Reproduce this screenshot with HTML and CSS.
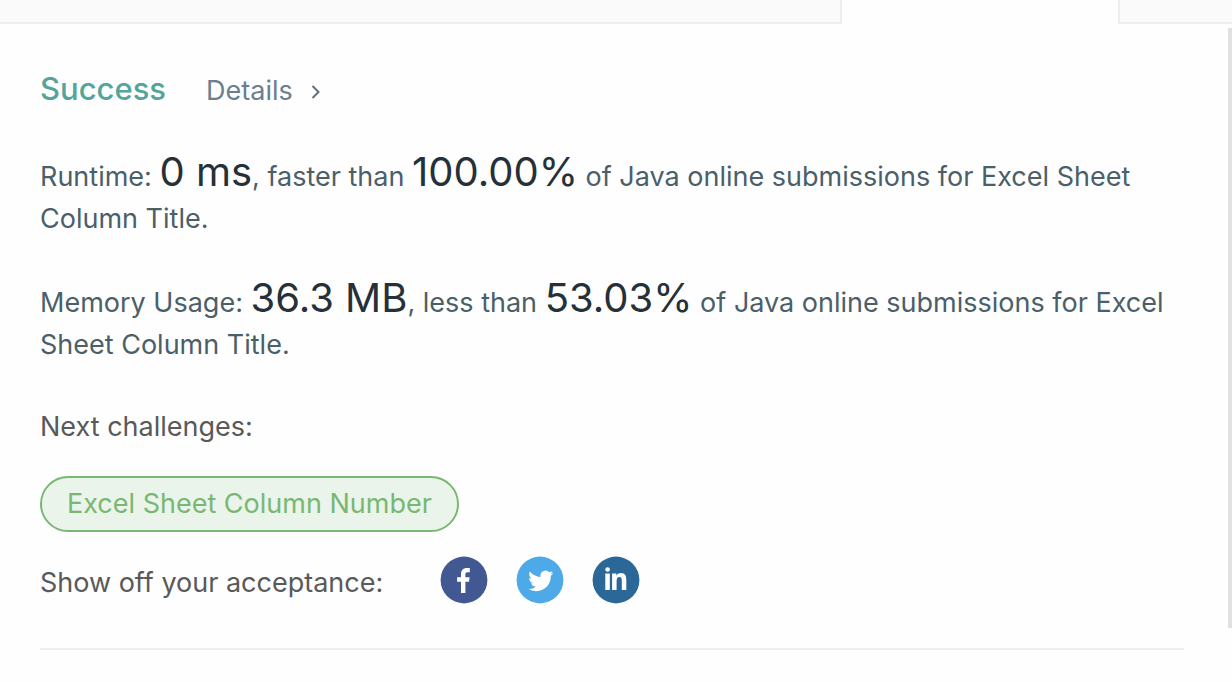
FILE: index.html
```html
<!DOCTYPE html>
<html lang="en">
<head>
<meta charset="utf-8">
<meta name="viewport" content="width=device-width, initial-scale=1">
<title>Submission result</title>
<link rel="stylesheet" href="styles.css">
</head>
<body>
<div class="tabs">
  <div class="tab tab-before"></div>
  <div class="tab tab-active"></div>
  <div class="tab tab-after"></div>
</div>
<div class="pane">
  <main class="result">
    <header class="status">
      <h1 class="verdict">Success</h1>
      <a class="details" href="#details">Details
        <svg class="chevron" viewBox="0 0 12 16" aria-hidden="true"><path d="M2.500 2l6 6-6 6"/></svg>
      </a>
    </header>
    <p class="metric">Runtime: <span class="value">0 ms</span>, faster than <span class="value">100.00%</span> of Java online submissions for Excel Sheet Column Title.</p>
    <p class="metric">Memory Usage: <span class="value">36.3 MB</span>, less than <span class="value">53.03%</span> of Java online submissions for Excel Sheet Column Title.</p>
    <h2 class="label">Next challenges:</h2>
    <a class="challenge" href="#challenge">Excel Sheet Column Number</a>
    <div class="share">
      <span class="label">Show off your acceptance:</span>
      <div class="networks">
        <a class="network" href="#facebook" aria-label="Facebook">
          <svg viewBox="0 0 48 48"><circle cx="24" cy="24" r="23.4" fill="#425893"/><path d="M21 37V25.700h-3.900v-4.500h3.900v-3.300c0-3.900 2.400-6 5.900-6 1.100 0 2.100.1 2.900.2v4.100h-2.200c-1.800 0-2.200.9-2.200 2.100v2.900h4.200l-.6 4.500h-3.600V37z" fill="#fff"/></svg>
        </a>
        <a class="network" href="#twitter" aria-label="Twitter">
          <svg viewBox="0 0 48 48"><circle cx="24" cy="24" r="23.4" fill="#4da9e7"/><path transform="translate(12.200 12.300) scale(1.050)" d="M23.950 4.570a10 10 0 0 1-2.820.77 4.960 4.960 0 0 0 2.160-2.720c-.95.55-2 .96-3.130 1.180a4.920 4.920 0 0 0-8.380 4.480C7.690 8.090 4.070 6.130 1.640 3.160a4.820 4.820 0 0 0-.67 2.480c0 1.710.87 3.210 2.190 4.100a4.900 4.900 0 0 1-2.230-.62v.06a4.920 4.920 0 0 0 3.950 4.830 5 5 0 0 1-2.210.08 4.940 4.940 0 0 0 4.600 3.420A9.870 9.870 0 0 1 0 19.540a13.990 13.990 0 0 0 7.550 2.210c9.050 0 14-7.500 14-13.990 0-.21 0-.42-.02-.63a9.940 9.940 0 0 0 2.420-2.560z" fill="#fff"/></svg>
        </a>
        <a class="network" href="#linkedin" aria-label="LinkedIn">
          <svg viewBox="0 0 48 48"><circle cx="24" cy="24" r="23.4" fill="#2b6897"/><g fill="#fff"><circle cx="15.600" cy="13.500" r="2.300"/><path d="M13.300 17.500h4.500V34h-4.500zM20.100 17.500h4.300v2.200c.8-1.500 2.300-2.600 4.600-2.600 4.400 0 5.300 2.900 5.300 6.900v10h-4.500v-8.900c0-2.200-.2-4.100-2.400-4.100s-2.800 1.800-2.800 4V34h-4.500z"/></g></svg>
        </a>
      </div>
    </div>
    <hr class="divider">
  </main>
  <div class="scroll-thumb"></div>
</div>
</body>
</html>
```
FILE: styles.css
```css
* {
  box-sizing: border-box;
}

body {
  margin: 0;
  background: #fefefe;
  color: #595959;
  font: 400 27px/42px Inter, "Liberation Sans", sans-serif;
}

.tabs {
  display: grid;
  grid-template-columns: 842fr 276fr 114fr;
  height: 24px;
}

.tab {
  border: 0 solid #eee;
}

.tab-before {
  background: #fafafa;
  border-width: 0 2px 2px 0;
}

.tab-after {
  background: #fafafa;
  border-width: 0 0 2px 2px;
}

.pane {
  display: flex;
  align-items: flex-start;
}

.result {
  flex: 1;
  min-width: 0;
  padding: 44px 44px 32px 40px;
}

.status {
  display: flex;
  align-items: baseline;
  gap: 40px;
  margin-bottom: 44px;
}

.verdict {
  margin: 0;
  color: #53a59a;
  font-size: 31px;
  font-weight: 500;
}

.details {
  color: #6b7f8f;
  text-decoration: none;
}

.chevron {
  width: 12px;
  height: 16px;
  margin-left: 10px;
  fill: none;
  stroke: #5d7284;
  stroke-width: 2;
}

.metric {
  margin: 0 0 42px;
  color: #4b5f69;
}

.metric + .metric {
  margin-bottom: 40px;
}

.value {
  color: #263038;
  font-size: 40px;
  line-height: 32px;
}

.label {
  margin: 0;
  font-size: 27px;
  font-weight: 400;
}

.challenge {
  display: inline-block;
  margin-top: 28px;
  padding: 5px 25px;
  border: 2px solid #78b872;
  border-radius: 28px;
  background: #ebf4ea;
  color: #78b872;
  text-decoration: none;
}

.share {
  display: flex;
  align-items: flex-end;
  gap: 57px;
  margin-top: 24px;
}

.networks {
  display: flex;
  gap: 28px;
}

.network,
.network svg {
  display: block;
  width: 48px;
  height: 48px;
}

.divider {
  height: 2px;
  margin: 44px 0 0;
  border: 0;
  background: #eee;
}

.scroll-thumb {
  width: 4px;
  height: 600px;
  margin-top: 4px;
  background: #e1e1e1;
}
```
